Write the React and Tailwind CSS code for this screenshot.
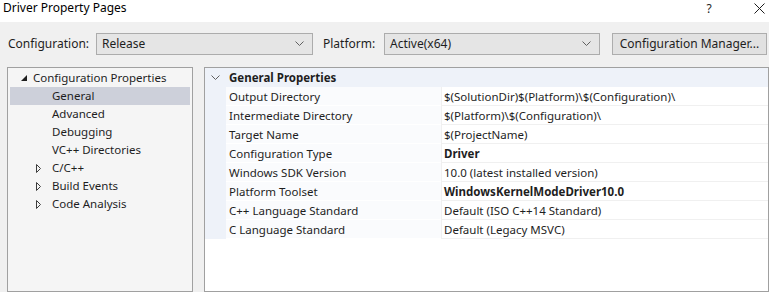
import React from 'react';

const font = { fontFamily: '"Noto Sans", "Segoe UI", sans-serif' };

const tree = [
  { label: 'Configuration Properties', level: 0, icon: 'open' },
  { label: 'General', level: 1, selected: true },
  { label: 'Advanced', level: 1 },
  { label: 'Debugging', level: 1 },
  { label: 'VC++ Directories', level: 1 },
  { label: 'C/C++', level: 1, icon: 'closed' },
  { label: 'Build Events', level: 1, icon: 'closed' },
  { label: 'Code Analysis', level: 1, icon: 'closed' },
];

const props = [
  { name: 'Output Directory', value: '$(SolutionDir)$(Platform)\\$(Configuration)\\' },
  { name: 'Intermediate Directory', value: '$(Platform)\\$(Configuration)\\' },
  { name: 'Target Name', value: '$(ProjectName)' },
  { name: 'Configuration Type', value: 'Driver', bold: true },
  { name: 'Windows SDK Version', value: '10.0 (latest installed version)' },
  { name: 'Platform Toolset', value: 'WindowsKernelModeDriver10.0', bold: true },
  { name: 'C++ Language Standard', value: 'Default (ISO C++14 Standard)' },
  { name: 'C Language Standard', value: 'Default (Legacy MSVC)' },
];

function Chevron({ className }) {
  return (
    <svg width="9" height="6" viewBox="0 0 9 6" className={className}>
      <path d="M0.5 0.5 L4.5 4.5 L8.5 0.5" fill="none" stroke="#606060" strokeWidth="1" />
    </svg>
  );
}

function Dropdown({ value, className }) {
  return (
    <div className={`h-[22px] flex items-center justify-between pl-[5px] pr-[8px] bg-[#e5e5e5] border border-[#acacac] ${className}`}>
      <span>{value}</span>
      <Chevron />
    </div>
  );
}

function TreeIcon({ type }) {
  if (type === 'open') {
    return (
      <svg width="6" height="6" viewBox="0 0 6 6">
        <path d="M6 0 L6 6 L0 6 Z" fill="#1e1e1e" />
      </svg>
    );
  }
  return (
    <svg width="5" height="9" viewBox="0 0 5 9">
      <path d="M0.5 0.5 L4.5 4.5 L0.5 8.5 Z" fill="none" stroke="#3c3c3c" strokeWidth="1" />
    </svg>
  );
}

export default function App() {
  return (
    <div className="w-[769px] h-[292px] overflow-hidden flex flex-col text-[11.5px] text-[#1e1e1e] bg-[#f0f0f0]" style={font}>
      {/* Title bar */}
      <div className="h-[22px] bg-white flex items-center justify-between pl-[3px] shrink-0">
        <span className="text-[12px] text-black -mt-[6px]">Driver Property Pages</span>
        <div className="flex items-center -mt-[5px]">
          <span className="text-[12px] w-[10px] text-center mr-[40px]">?</span>
          <svg width="11" height="11" viewBox="0 0 11 11" className="mr-[4px]">
            <path d="M0.5 0.5 L10.5 10.5 M10.5 0.5 L0.5 10.5" stroke="#1e1e1e" strokeWidth="1" />
          </svg>
        </div>
      </div>

      {/* Configuration row */}
      <div className="flex items-center mt-[11px] h-[22px] shrink-0 text-[12px]">
        <span className="w-[96px] pl-[8px]">Configuration:</span>
        <Dropdown value="Release" className="w-[217px]" />
        <span className="w-[71px] pl-[10px]">Platform:</span>
        <Dropdown value="Active(x64)" className="w-[216px]" />
        <button className="ml-[12px] w-[155px] h-[22px] bg-[#e1e1e1] border border-[#adadad] text-center">
          Configuration Manager...
        </button>
      </div>

      {/* Panels */}
      <div className="flex flex-1 mt-[12px] gap-[11px] min-h-0">
        <div className="ml-[7px] w-[186px] border border-[#a0a0a0] bg-[#f5f5f5] pt-[1px] px-[2px]">
          {tree.map((item) => (
            <div
              key={item.label}
              className={`h-[18px] flex items-center ${item.selected ? 'bg-[#cdd0da]' : ''}`}
            >
              <div className={`flex items-center justify-center w-[8px] ${item.level === 0 ? 'ml-[10px]' : 'ml-[24px]'}`}>
                {item.icon && <TreeIcon type={item.icon} />}
              </div>
              <span className={item.level === 0 ? 'ml-[5px]' : 'ml-[10px]'}>{item.label}</span>
            </div>
          ))}
        </div>

        <div className="flex-1 border border-[#a0a0a0] bg-white">
          <div className="h-[19px] flex items-center bg-[#eef2f9] pt-[1px]">
            <div className="w-[21px] flex justify-center">
              <Chevron />
            </div>
            <span className="font-bold ml-[3px]">General Properties</span>
          </div>
          {props.map((p) => (
            <div key={p.name} className="h-[19px] flex">
              <div className="w-[21px] bg-[#eef2f9]" />
              <div className="w-[215px] flex items-center pl-[3px] pt-[1px] bg-[#fafbfd] border-b border-white">
                {p.name}
              </div>
              <div className={`flex-1 flex items-center pl-[2px] pt-[1px] border-b border-l border-[#f0f0f0] ${p.bold ? 'font-bold' : ''}`}>
                {p.value}
              </div>
            </div>
          ))}
        </div>
      </div>
    </div>
  );
}
